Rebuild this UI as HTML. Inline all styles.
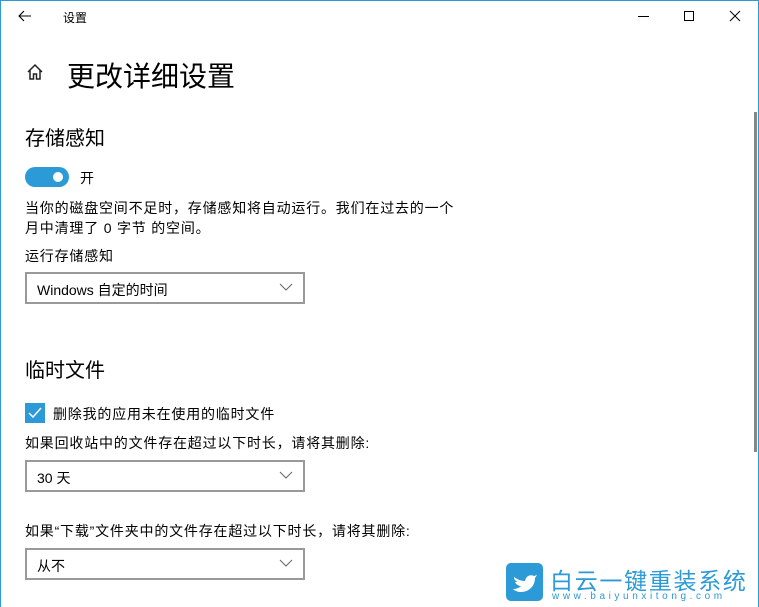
<!DOCTYPE html>
<html><head><meta charset="utf-8"><style>
*{margin:0;padding:0;box-sizing:border-box}
body{width:759px;height:607px;overflow:hidden;background:#fff;font-family:"Liberation Sans","Microsoft YaHei","Noto Sans CJK SC",sans-serif;color:#000;position:relative}
.a{position:absolute;white-space:nowrap}
.frame{position:absolute;left:0;top:0;width:759px;height:607px;border:1px solid #2b9ad6;border-bottom:none;pointer-events:none}
.t14{font-size:14px;letter-spacing:0.8px}
.dd{position:absolute;left:25px;width:280px;height:32px;border:2px solid #999;font-size:14px;padding:6px 0 0 10px}
.dd svg{position:absolute;right:10px;top:9px}
</style></head><body>
<div class="frame"></div>
<svg class="a" style="left:18px;top:10px" width="14" height="12" viewBox="0 0 14 12"><path d="M13 6H1.5M6 1L1 6l5 5" stroke="#000" fill="none" stroke-width="1.1"/></svg>
<div class="a" style="left:63px;top:9px;font-size:12px">设置</div>
<div class="a" style="left:638px;top:16px;width:11px;height:1px;background:#000"></div>
<div class="a" style="left:684px;top:11px;width:10px;height:10px;border:1px solid #000"></div>
<svg class="a" style="left:729px;top:10px" width="12" height="12"><path d="M1 1L11 11M11 1L1 11" stroke="#000" stroke-width="1"/></svg>
<svg class="a" style="left:26px;top:63px" width="18" height="18" viewBox="0 0 18 18"><path d="M2 9L9 2l7 7M4 7.5V16h3.5v-5h3v5H14V7.5" stroke="#222" fill="none" stroke-width="1.5"/></svg>
<div class="a" style="left:67px;top:55px;font-size:28px">更改详细设置</div>
<div class="a" style="left:25px;top:122px;font-size:20px">存储感知</div>
<div class="a" style="left:25px;top:167px;width:44px;height:20px;border-radius:10px;background:#2b9ad6"></div>
<div class="a" style="left:53px;top:172px;width:10px;height:10px;border-radius:5px;background:#fff"></div>
<div class="a t14" style="left:80px;top:168px">开</div>
<div class="a t14" style="left:25px;top:198px;line-height:20px">当你的磁盘空间不足时，存储感知将自动运行。我们在过去的一个<br>月中清理了 0 字节 的空间。</div>
<div class="a t14" style="left:25px;top:246px">运行存储感知</div>
<div class="dd" style="top:272px">Windows 自定的时间<svg width="14" height="8"><path d="M1 1l6 6 6-6" stroke="#666" fill="none"/></svg></div>
<div class="a" style="left:25px;top:354px;font-size:20px">临时文件</div>
<div class="a" style="left:25px;top:403px;width:20px;height:20px;background:#2b9ad6"></div>
<svg class="a" style="left:27px;top:406px" width="16" height="14"><path d="M2 7l4 4 8-9" stroke="#fff" fill="none" stroke-width="1.5"/></svg>
<div class="a t14" style="left:53px;top:404px">删除我的应用未在使用的临时文件</div>
<div class="a t14" style="left:25px;top:433px">如果回收站中的文件存在超过以下时长，请将其删除:</div>
<div class="dd" style="top:460px">30 天<svg width="14" height="8"><path d="M1 1l6 6 6-6" stroke="#666" fill="none"/></svg></div>
<div class="a t14" style="left:25px;top:521px">如果“下载”文件夹中的文件存在超过以下时长，请将其删除:</div>
<div class="dd" style="top:548px">从不<svg width="14" height="8"><path d="M1 1l6 6 6-6" stroke="#666" fill="none"/></svg></div>
<div class="a" style="left:754px;top:112px;width:3px;height:340px;background:#868686"></div>
<div class="a" style="left:506px;top:563px;width:37px;height:38px;border-radius:5px;background:#2b9ad6"></div>
<svg class="a" style="left:511px;top:569px" width="28" height="26"><path d="M3 8c4 3 8 4 11 4 1-5 5-7 9-5l3-1-2 3c0 8-6 14-14 14-3 0-6-1-8-3 3 0 6-1 8-3-3 0-5-2-6-4h3c-3-1-4-3-4-5z" fill="#fff"/></svg>
<div class="a" style="left:550px;top:562px;font-size:23px;color:#2b9ad6;letter-spacing:1.7px">白云一键重装系统</div>
<div class="a" style="left:552px;top:591px;font-size:10px;color:#2b9ad6;letter-spacing:3.6px">www.baiyunxitong.com</div>
</body></html>
